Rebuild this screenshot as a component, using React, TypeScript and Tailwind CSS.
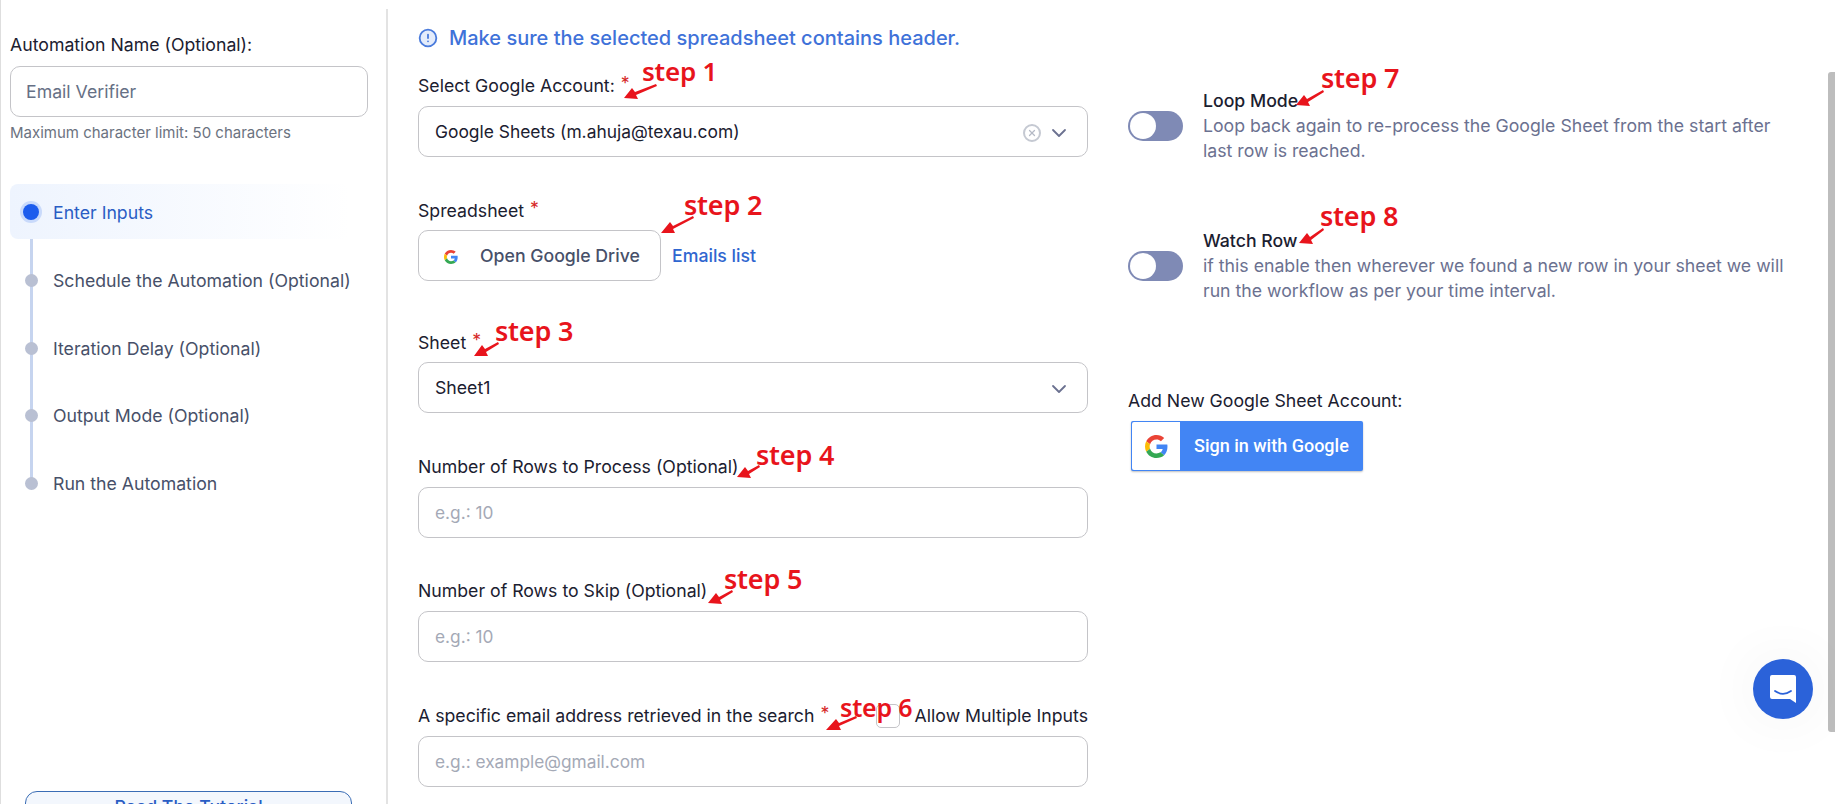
import React from "react";
import { AlertCircle, ChevronDown, X } from "lucide-react";

function GoogleG({ className }: { className: string }) {
  return (
    <svg viewBox="0 0 48 48" className={className}>
      <path fill="#EA4335" d="M24 9.5c3.5 0 6.7 1.2 9.2 3.6l6.9-6.9C35.9 2.4 30.4 0 24 0 14.6 0 6.5 5.4 2.6 13.2l8 6.2C12.5 13.7 17.800 9.500 24 9.500z" />
      <path fill="#4285F4" d="M46.900 24.500c0-1.600-.1-3.100-.4-4.500H24v9h12.900c-.6 3-2.200 5.500-4.700 7.200l7.700 6c4.500-4.200 7-10.300 7-17.700z" />
      <path fill="#FBBC05" d="M10.500 28.600c-.5-1.400-.8-3-.8-4.600s.3-3.200.8-4.600l-8-6.200C.9 16.500 0 20.100 0 24s.9 7.500 2.600 10.800l7.900-6.200z" />
      <path fill="#34A853" d="M24 48c6.500 0 11.900-2.100 15.900-5.800l-7.700-6c-2.200 1.400-4.900 2.300-8.200 2.300-6.200 0-11.500-4.200-13.400-9.900l-8 6.200C6.500 42.600 14.600 48 24 48z" />
    </svg>
  );
}

function Star() {
  return <span className="text-[#d62828] ml-[6px] relative top-[-3px]">*</span>;
}

function Toggle() {
  return (
    <div className="w-[55px] h-[30px] shrink-0 rounded-full bg-[#7f8ab5] flex items-center pl-[2px]">
      <div className="w-[26px] h-[26px] rounded-full bg-white" />
    </div>
  );
}

function TextInput({ placeholder }: { placeholder: string }) {
  return (
    <div className="h-[51px] border border-[#c4c4c8] rounded-[10px] flex items-center px-4 text-[#a4a9b6] text-[17.300px]">
      {placeholder}
    </div>
  );
}

function StepRow({ label }: { label: string }) {
  return (
    <div className="h-[67.5px] flex items-center text-[#475069]">
      <div className="w-[13px] h-[13px] ml-[15px] rounded-full bg-[#b9c0d3] relative" />
      <span className="ml-[15px] whitespace-nowrap relative top-px">{label}</span>
    </div>
  );
}

function StepLabel({ className, children }: { className: string; children: React.ReactNode }) {
  return (
    <span className={`absolute text-[#e8141c] font-['Noto_Sans',sans-serif] font-semibold tracking-[-0.2px] leading-9 whitespace-nowrap ${className}`}>
      {children}
    </span>
  );
}

export default function App() {
  return (
    <div className="relative w-[1835px] h-[804px] overflow-hidden bg-white flex border-l border-[#dedede] text-[#1b2030] font-['Inter',sans-serif] text-[17.700px]">
      {/* Sidebar */}
      <aside className="w-[387px] shrink-0 mt-[9px] border-r-2 border-[#e3e3e3] h-[795px] flex flex-col pl-[9px] pr-[18px] overflow-hidden">
        <div className="mt-[24px] h-6 leading-6 whitespace-nowrap">Automation Name (Optional):</div>
        <div className="mt-[9px] h-[51px] border border-[#c4c4c8] rounded-[10px] flex items-center pt-[2px] px-[15px] text-[#667085]">Email Verifier</div>
        <div className="mt-[6px] text-[15px] leading-5 text-[#6b7280] whitespace-nowrap">Maximum character limit: 50 characters</div>
        <div className="relative mt-[41px]">
          <div className="absolute left-[19.500px] top-[55px] w-[3px] h-[240px] bg-[#c6d4ef]" />
          <div className="h-[55px] w-[340px] rounded-lg bg-gradient-to-r from-[#eef4fe] to-white flex items-center text-[#2a5dc4]">
            <div className="relative ml-[13px] w-[16px] h-[16px] rounded-full bg-[#1c5ced] ring-[3px] ring-[#c9dafb]" />
            <span className="ml-[14px] relative top-[2px]">Enter Inputs</span>
          </div>
          <div className="pt-[8px]">
            <StepRow label="Schedule the Automation (Optional)" />
            <StepRow label="Iteration Delay (Optional)" />
            <StepRow label="Output Mode (Optional)" />
            <StepRow label="Run the Automation" />
          </div>
        </div>
        <div className="mt-auto ml-[15px] w-[327px] h-[40px] mb-[-27px] shrink-0 rounded-t-[12px] border border-[#3a6db5] bg-[#f3f7fd] text-center text-[#2a5dc4] font-medium pt-[3px] leading-6">
          Read The Tutorial
        </div>
      </aside>

      {/* Form column */}
      <main className="w-[670px] ml-[30px] shrink-0">
        <div className="mt-[26px] h-6 flex items-center text-[#3f72d9] text-[20px] font-medium whitespace-nowrap">
          <AlertCircle className="w-[20px] h-[20px] mr-[11px] fill-[#e4ecfb] text-[#4a7bdc]" strokeWidth={2.200} />
          Make sure the selected spreadsheet contains header.
        </div>

        <div className="mt-[23px] h-6 leading-[26px]">Select Google Account:<Star /></div>
        <div className="mt-[9px] h-[51px] border border-[#c4c4c8] rounded-[10px] flex items-center pt-[2px] pl-4 pr-[16px]">
          <span className="flex-1 text-[17.400px]">Google Sheets (m.ahuja@texau.com)</span>
          <span className="w-[18px] h-[18px] rounded-full border-2 border-[#c5c9d2] flex items-center justify-center text-[#b5bac6] mr-[6px]">
            <X className="w-[10px] h-[10px]" strokeWidth={3} />
          </span>
          <ChevronDown className="w-[24px] h-[24px] text-[#6b7190]" strokeWidth={1.800} />
        </div>

        <div className="mt-[41px] h-6 leading-[26px]">Spreadsheet<Star /></div>
        <div className="mt-[8px] flex items-center">
          <div className="w-[243px] h-[51px] border border-[#c4c4c8] rounded-[10px] flex items-center pt-[2px] pl-[25px] text-[#475069] font-medium">
            <GoogleG className="w-[14px] h-[14px]" />
            <span className="ml-[22px]">Open Google Drive</span>
          </div>
          <span className="ml-[11px] text-[#2f66d0] font-medium pt-[2px]">Emails list</span>
        </div>

        <div className="mt-[49px] h-6 leading-[26px]">Sheet<Star /></div>
        <div className="mt-[8px] h-[51px] border border-[#c4c4c8] rounded-[10px] flex items-center pt-[2px] pl-4 pr-[16px]">
          <span className="flex-1">Sheet1</span>
          <ChevronDown className="w-[24px] h-[24px] text-[#6b7190]" strokeWidth={1.800} />
        </div>

        <div className="mt-[41px] h-6 leading-[26px]">Number of Rows to Process (Optional)</div>
        <div className="mt-[9px]"><TextInput placeholder="e.g.: 10" /></div>

        <div className="mt-[40px] h-6 leading-[26px]">Number of Rows to Skip (Optional)</div>
        <div className="mt-[9px]"><TextInput placeholder="e.g.: 10" /></div>

        <div className="mt-[42px] h-6 leading-6 flex items-center whitespace-nowrap">
          <span>A specific email address retrieved in the search<Star /></span>
          <span className="ml-auto w-[24px] h-[24px] border border-[#c4c4c8] rounded-[5px]" />
          <span className="ml-[15px]">Allow Multiple Inputs</span>
        </div>
        <div className="mt-[8px]"><TextInput placeholder="e.g.: example@gmail.com" /></div>
      </main>

      {/* Right column */}
      <section className="ml-[40px] w-[640px] shrink-0">
        <div className="mt-[88px] flex">
          <div className="mt-[23px]"><Toggle /></div>
          <div className="ml-[20px]">
            <div className="h-6 leading-[26px] font-medium whitespace-nowrap">Loop Mode</div>
            <div className="text-[#6b7190] leading-[24.5px] mt-[2px] whitespace-nowrap">
              Loop back again to re-process the Google Sheet from the start after<br />last row is reached.
            </div>
          </div>
        </div>
        <div className="mt-[65px] flex">
          <div className="mt-[23px]"><Toggle /></div>
          <div className="ml-[20px]">
            <div className="h-6 leading-[26px] font-medium whitespace-nowrap">Watch Row</div>
            <div className="text-[#6b7190] leading-[24.5px] mt-[2px] whitespace-nowrap">
              if this enable then wherever we found a new row in your sheet we will<br />run the workflow as per your time interval.
            </div>
          </div>
        </div>
        <div className="mt-[85px] h-6 leading-[26px]">Add New Google Sheet Account:</div>
        <div className="mt-[9px] ml-[3px] w-[232px] h-[50px] bg-[#4285f4] rounded-[2px] flex items-center p-px shadow-[0_1px_2px_rgba(0,0,0,0.25)]">
          <div className="w-[48px] h-full bg-white flex items-center justify-center rounded-l-[2px]">
            <GoogleG className="w-[23px] h-[23px]" />
          </div>
          <span className="ml-[14px] pb-[2px] font-['Roboto',sans-serif] font-medium text-white text-[18px] whitespace-nowrap">Sign in with Google</span>
        </div>
      </section>

      {/* Scrollbar thumb */}
      <div className="absolute right-0 top-[72px] w-[7px] h-[660px] rounded-l-[3px] bg-[#bdbdbd]" />

      {/* Chat launcher */}
      <div className="absolute left-[1752px] top-[659px] w-[60px] h-[60px] rounded-full bg-[#2b62d9] shadow-[0_0_60px_rgba(0,0,0,0.06)] flex items-center justify-center">
        <svg viewBox="0 0 28 30" className="w-[28px] h-[30px]">
          <path fill="#fff" d="M3 1h22a2 2 0 0 1 2 2v26l-6-4H3a2 2 0 0 1-2-2V3a2 2 0 0 1 2-2z" />
          <path fill="none" stroke="#2b62d9" strokeWidth="1.800" strokeLinecap="round" d="M6 17c5 3.500 11 3.500 16 0" />
        </svg>
      </div>

      {/* Red annotations */}
      <svg className="absolute inset-0 w-[1835px] h-[804px] pointer-events-none" viewBox="0 0 1835 804">
        <g fill="#e8141c">
          <polygon points="655,84 634,92 631,88 623,98 637,99 635,95 656,86" />
          <polygon points="692,216 672,226 669,222 660,233 674,233 672,229 693,218" />
          <polygon points="497,342 484,349 481,345 473,356 487,356 485,352 498,344" />
          <polygon points="758,465 747,471 744,467 736,477 750,478 748,474 759,467" />
          <polygon points="731,590 718,597 715,593 707,603 721,604 719,600 732,592" />
          <polygon points="855,716 838,723 835,719 825,730 840,730 838,726 856,718" />
          <polygon points="1322,90 1306,99 1303,95 1295,105 1309,106 1307,102 1323,92" />
          <polygon points="1322,228 1309,237 1306,233 1298,243 1312,244 1310,240 1323,230" />
        </g>
      </svg>
      <StepLabel className="text-[26px] left-[641px] top-[53px]">step 1</StepLabel>
      <StepLabel className="text-[27px] left-[683px] top-[187px]">step 2</StepLabel>
      <StepLabel className="text-[27px] left-[494px] top-[313px]">step 3</StepLabel>
      <StepLabel className="text-[27px] left-[755px] top-[437px]">step 4</StepLabel>
      <StepLabel className="text-[27px] left-[723px] top-[561px]">step 5</StepLabel>
      <StepLabel className="text-[25px] left-[839px] top-[689px]">step 6</StepLabel>
      <StepLabel className="text-[27px] left-[1320px] top-[60px]">step 7</StepLabel>
      <StepLabel className="text-[27px] left-[1319px] top-[198px]">step 8</StepLabel>
    </div>
  );
}
